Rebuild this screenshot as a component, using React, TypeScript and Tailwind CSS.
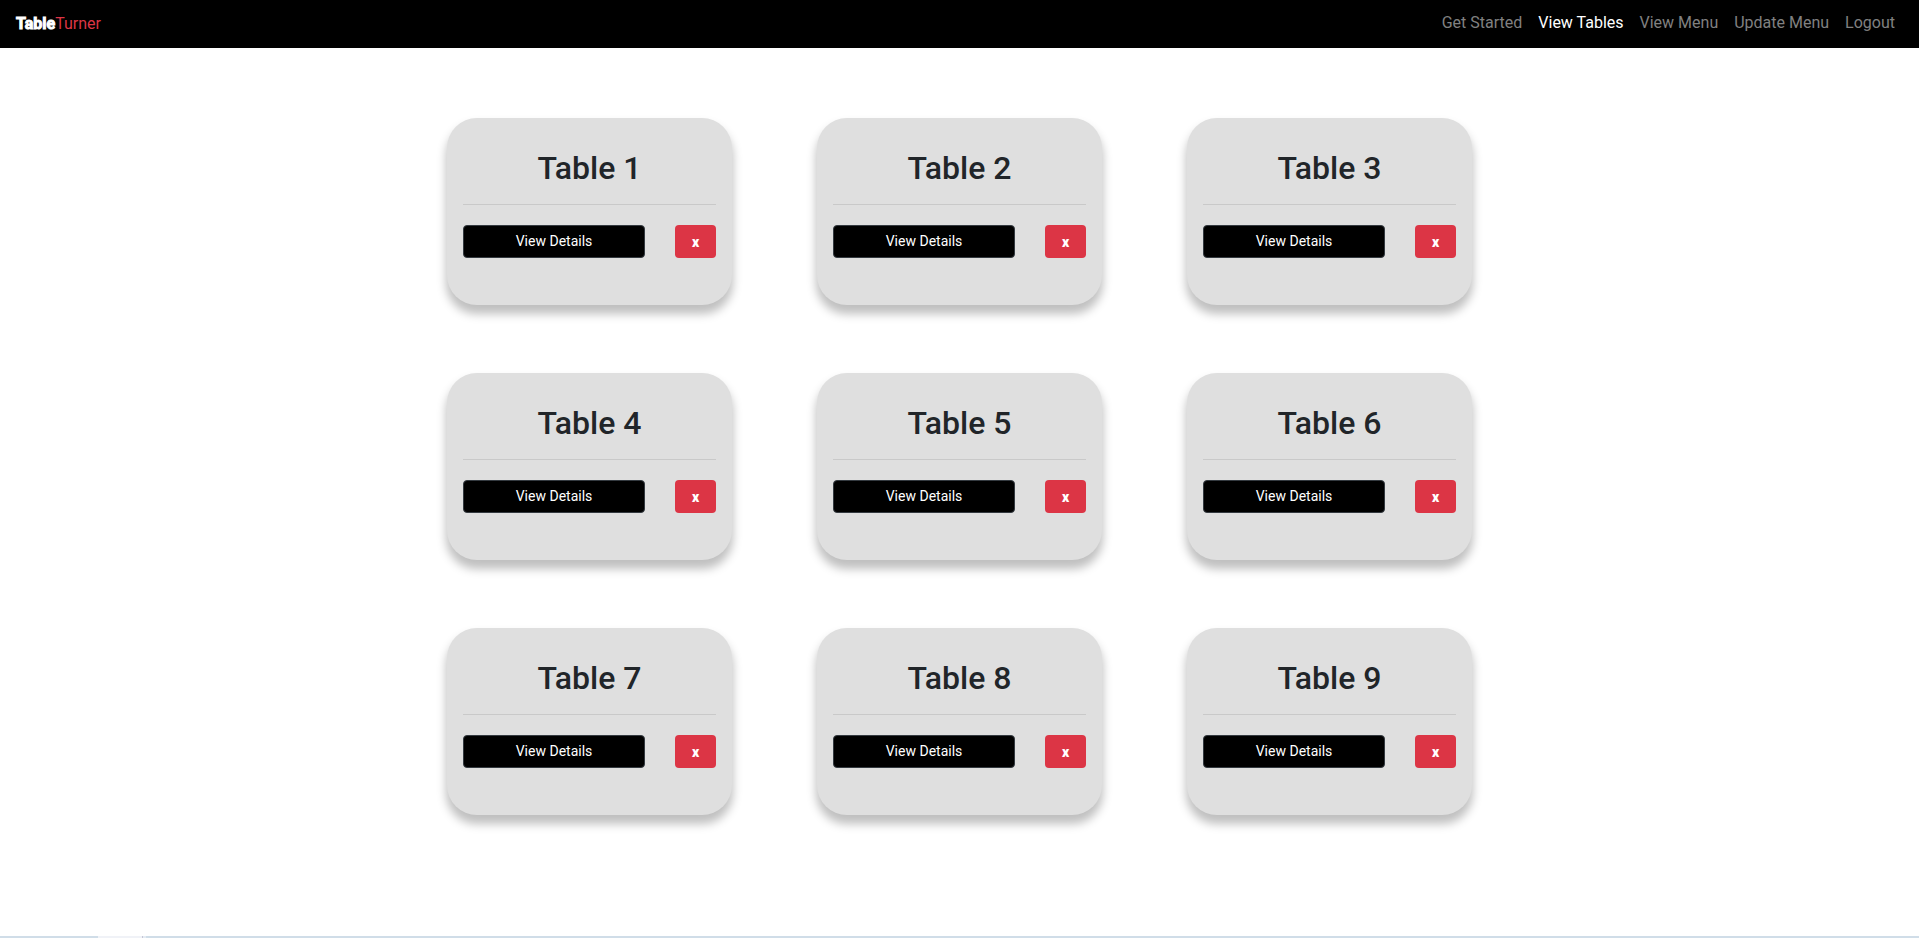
const navItems = [
  { label: "Get Started", active: false },
  { label: "View Tables", active: true },
  { label: "View Menu", active: false },
  { label: "Update Menu", active: false },
  { label: "Logout", active: false },
];

const tables = [1, 2, 3, 4, 5, 6, 7, 8, 9];

function Navbar() {
  return (
    <header className="flex h-12 items-center justify-between bg-black pr-6 pl-4 text-base leading-6">
      <a href="#" className="text-[#dc3545]">
        <span className="font-bold text-white [-webkit-text-stroke:1px_white]">Table</span>Turner
      </a>
      <nav className="flex gap-4 pb-0.5">
        {navItems.map((item) => (
          <a
            key={item.label}
            href="#"
            aria-current={item.active ? "page" : undefined}
            className={item.active ? "text-white" : "text-[#808080]"}
          >
            {item.label}
          </a>
        ))}
      </nav>
    </header>
  );
}

function TableCard({ id }: { id: number }) {
  return (
    <article className="w-[285px] rounded-[30px] bg-[#dfdfdf] px-4 pt-[31px] pb-[47px] shadow-[0_8px_10px_1px_rgba(0,0,0,0.25)]">
      <h2 className="text-center text-[32px] leading-[38px] font-medium text-[#212529]">Table {id}</h2>
      <hr className="mt-[17px] mb-5 border-t border-[#c9c9c9]" />
      <div className="flex justify-between">
        <button
          type="button"
          className="h-[33px] w-[182px] rounded border border-[#343a40] bg-black pb-0.5 text-sm text-white"
        >
          View Details
        </button>
        <button
          type="button"
          aria-label={`Remove table ${id}`}
          className="h-[33px] w-[41px] rounded bg-[#dc3545] text-sm font-black text-white"
        >
          x
        </button>
      </div>
    </article>
  );
}

export default function App() {
  return (
    <div className="flex min-h-screen flex-col bg-white font-[Roboto,sans-serif]">
      <Navbar />
      <main className="mx-auto grid w-full max-w-[1110px] grow grid-cols-1 content-start justify-items-center gap-y-[68px] py-[70px] md:grid-cols-2 lg:grid-cols-3">
        {tables.map((id) => (
          <TableCard key={id} id={id} />
        ))}
      </main>
      <footer className="flex h-0.5 bg-[#d0dde8]">
        <div className="ml-[98px] w-11 bg-[#f0f2f7]" />
        <div className="w-px bg-[#c5c5d5]" />
        <div className="w-[3px] bg-[#e4ebf3]" />
      </footer>
    </div>
  );
}
